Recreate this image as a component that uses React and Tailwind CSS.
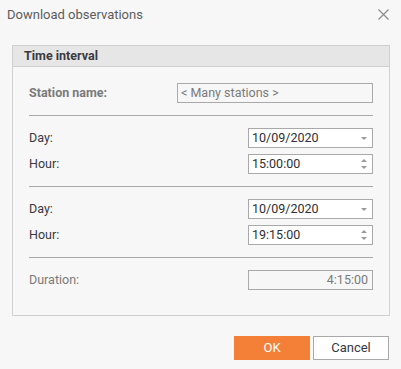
import React from "react";

const font = { fontFamily: "Roboto, 'Liberation Sans', sans-serif" };

function Caret({ up }) {
  return (
    <svg width="6" height="3" viewBox="0 0 6 3" className="block">
      {up ? <path d="M0 3 L3 0 L6 3 Z" fill="#9a9a9a" /> : <path d="M0 0 L6 0 L3 3 Z" fill="#9a9a9a" />}
    </svg>
  );
}

function Field({ value, kind, muted, align = "left" }) {
  return (
    <div
      className={`h-[20px] w-[125px] border border-[#a9a9a9] ${
        muted ? "bg-[#f7f7f7]" : "bg-white"
      } flex items-center ${align === "right" ? "justify-end pr-[4px]" : "pl-[3px] pr-[5px]"}`}
    >
      <span
        className={`flex-1 text-[12.5px] leading-none ${align === "right" ? "text-right" : ""} ${
          muted ? "text-[#7a7a7a]" : "text-[#2f2f35]"
        }`}
      >
        {value}
      </span>
      {kind === "drop" && (
        <div className="pt-[1px]">
          <Caret />
        </div>
      )}
      {kind === "spin" && (
        <div className="flex flex-col gap-[4px]">
          <Caret up />
          <Caret />
        </div>
      )}
    </div>
  );
}

function Row({ label, children, labelClass = "text-[#3a3a40]" }) {
  return (
    <div className="flex items-center justify-between">
      <span className={`text-[12.5px] ${labelClass}`}>{label}</span>
      {children}
    </div>
  );
}

function Sep() {
  return <div className="h-px bg-[#a9a9a9] my-[12px]" />;
}

export default function App() {
  return (
    <div className="w-[401px] h-[369px] bg-[#f7f7f7] relative" style={font}>
      <div className="h-[29px] flex items-center justify-between pl-[7px] pr-[12px]">
        <span className="text-[13px] text-[#5c5c5c]">Download observations</span>
        <svg width="11" height="11" viewBox="0 0 11 11">
          <path d="M0.5 0.5 L10.5 10.5 M10.5 0.5 L0.5 10.5" stroke="#8c8c8c" strokeWidth="1.2" />
        </svg>
      </div>
      <div className="mt-[16px] mx-[12px] w-[378px] h-[271px] border border-[#d0d0d0]">
        <div className="h-[21px] bg-[#e6e6e6] border-b border-[#d0d0d0] flex items-center pl-[11px]">
          <span className="text-[12.5px] font-bold text-[#3a3a40]">Time interval</span>
        </div>
        <div className="px-[16px] pt-[16px]">
          <Row label="Station name:" labelClass="font-bold text-[#7a7a7a]">
            <div className="h-[20px] w-[196px] border border-[#a9a9a9] flex items-center pl-[3px]">
              <span className="text-[12.5px] text-[#7a7a7a] leading-none">&lt; Many stations &gt;</span>
            </div>
          </Row>
          <Sep />
          <div className="flex flex-col gap-[6px]">
            <Row label="Day:">
              <Field value="10/09/2020" kind="drop" />
            </Row>
            <Row label="Hour:">
              <Field value="15:00:00" kind="spin" />
            </Row>
          </div>
          <Sep />
          <div className="flex flex-col gap-[6px]">
            <Row label="Day:">
              <Field value="10/09/2020" kind="drop" />
            </Row>
            <Row label="Hour:">
              <Field value="19:15:00" kind="spin" />
            </Row>
          </div>
          <Sep />
          <Row label="Duration:" labelClass="text-[#7a7a7a]">
            <Field value="4:15:00" muted align="right" />
          </Row>
        </div>
      </div>
      <div className="flex justify-end gap-[3px] pr-[12px] mt-[20px]">
        <button className="w-[76px] h-[24px] bg-[#f47f36] text-white text-[13px] flex items-center justify-center">
          OK
        </button>
        <button className="w-[76px] h-[24px] bg-white border border-[#a9a9a9] text-[#333a45] text-[13px] flex items-center justify-center">
          Cancel
        </button>
      </div>
    </div>
  );
}
